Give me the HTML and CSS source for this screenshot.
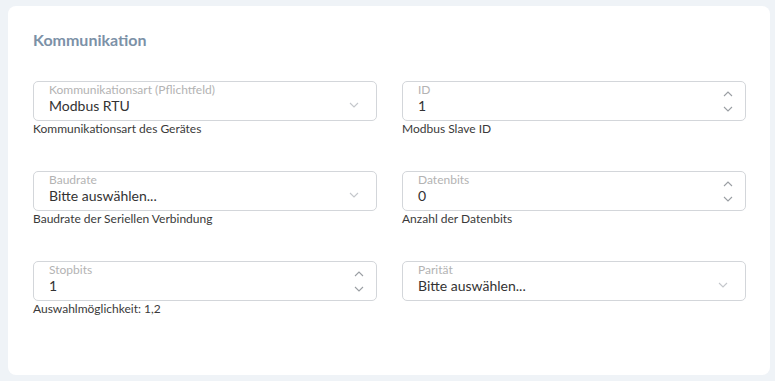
FILE: index.html
```html
<!DOCTYPE html>
<html lang="de">
<head>
    <meta charset="UTF-8">
    <meta name="viewport" content="width=device-width, initial-scale=1.0">
    <title>Kommunikation</title>
    <link rel="stylesheet" href="styles.css">
</head>
<body>

<div class="card">
    <h2 class="card-title">Kommunikation</h2>

    <div class="fields">
        <div class="field">
            <div class="box">
                <div class="box-text">
                    <span class="box-label">Kommunikationsart (Pflichtfeld)</span>
                    <span class="box-value">Modbus RTU</span>
                </div>
                <svg class="chevron" width="10" height="6" viewBox="0 0 10 6"><polyline points="1,1 5,5 9,1"/></svg>
            </div>
            <div class="hint">Kommunikationsart des Gerätes</div>
        </div>

        <div class="field">
            <div class="box">
                <div class="box-text">
                    <span class="box-label">ID</span>
                    <span class="box-value">1</span>
                </div>
                <div class="spin">
                    <svg width="10" height="6" viewBox="0 0 10 6"><polyline points="1,5 5,1 9,5"/></svg>
                    <svg width="10" height="6" viewBox="0 0 10 6"><polyline points="1,1 5,5 9,1"/></svg>
                </div>
            </div>
            <div class="hint">Modbus Slave ID</div>
        </div>

        <div class="field">
            <div class="box">
                <div class="box-text">
                    <span class="box-label">Baudrate</span>
                    <span class="box-value">Bitte auswählen...</span>
                </div>
                <svg class="chevron" width="10" height="6" viewBox="0 0 10 6"><polyline points="1,1 5,5 9,1"/></svg>
            </div>
            <div class="hint">Baudrate der Seriellen Verbindung</div>
        </div>

        <div class="field">
            <div class="box">
                <div class="box-text">
                    <span class="box-label">Datenbits</span>
                    <span class="box-value">0</span>
                </div>
                <div class="spin">
                    <svg width="10" height="6" viewBox="0 0 10 6"><polyline points="1,5 5,1 9,5"/></svg>
                    <svg width="10" height="6" viewBox="0 0 10 6"><polyline points="1,1 5,5 9,1"/></svg>
                </div>
            </div>
            <div class="hint">Anzahl der Datenbits</div>
        </div>

        <div class="field">
            <div class="box">
                <div class="box-text">
                    <span class="box-label">Stopbits</span>
                    <span class="box-value">1</span>
                </div>
                <div class="spin">
                    <svg width="10" height="6" viewBox="0 0 10 6"><polyline points="1,5 5,1 9,5"/></svg>
                    <svg width="10" height="6" viewBox="0 0 10 6"><polyline points="1,1 5,5 9,1"/></svg>
                </div>
            </div>
            <div class="hint">Auswahlmöglichkeit: 1,2</div>
        </div>

        <div class="field">
            <div class="box">
                <div class="box-text">
                    <span class="box-label">Parität</span>
                    <span class="box-value">Bitte auswählen...</span>
                </div>
                <svg class="chevron" width="10" height="6" viewBox="0 0 10 6"><polyline points="1,1 5,5 9,1"/></svg>
            </div>
        </div>
    </div>
</div>

</body>
</html>
```

FILE: styles.css
```css
body {
    font-family: Lato, "Open Sans", sans-serif;
    background-color: #eff3f7;
    margin: 0;
    padding: 6px 5px 6px 8px;
}

.card {
    background-color: #fff;
    border-radius: 8px;
    padding: 24px 24px 58px 25px;
}

.card-title {
    margin: 0 0 32px 0;
    font-size: 16px;
    font-weight: 700;
    line-height: 19px;
    color: #7c91a7;
}

.fields {
    display: grid;
    grid-template-columns: 1fr 1fr;
    column-gap: 25px;
    row-gap: 34px;
}

.box {
    height: 40px;
    box-sizing: border-box;
    border: 1px solid #d3d6da;
    border-radius: 5px;
    padding: 2px 12px 0 15px;
    display: flex;
    align-items: flex-start;
}

.box-text {
    flex: 1;
    display: flex;
    flex-direction: column;
}

.box-label {
    font-size: 12px;
    line-height: 12px;
    color: #b3b3b3;
}

.box-value {
    margin-top: 2px;
    font-size: 14px;
    line-height: 16px;
    color: #333;
}

.chevron {
    margin: 18px 5px 0 0;
}

.chevron polyline {
    fill: none;
    stroke: #c4c7cb;
    stroke-width: 1.1;
}

.spin {
    display: flex;
    flex-direction: column;
    gap: 9px;
    margin: 7px 0 0 0;
}

.spin polyline {
    fill: none;
    stroke: #9a9ea3;
    stroke-width: 1.1;
}

.hint {
    font-size: 12px;
    line-height: 16px;
    color: #3a3a3a;
}
```
